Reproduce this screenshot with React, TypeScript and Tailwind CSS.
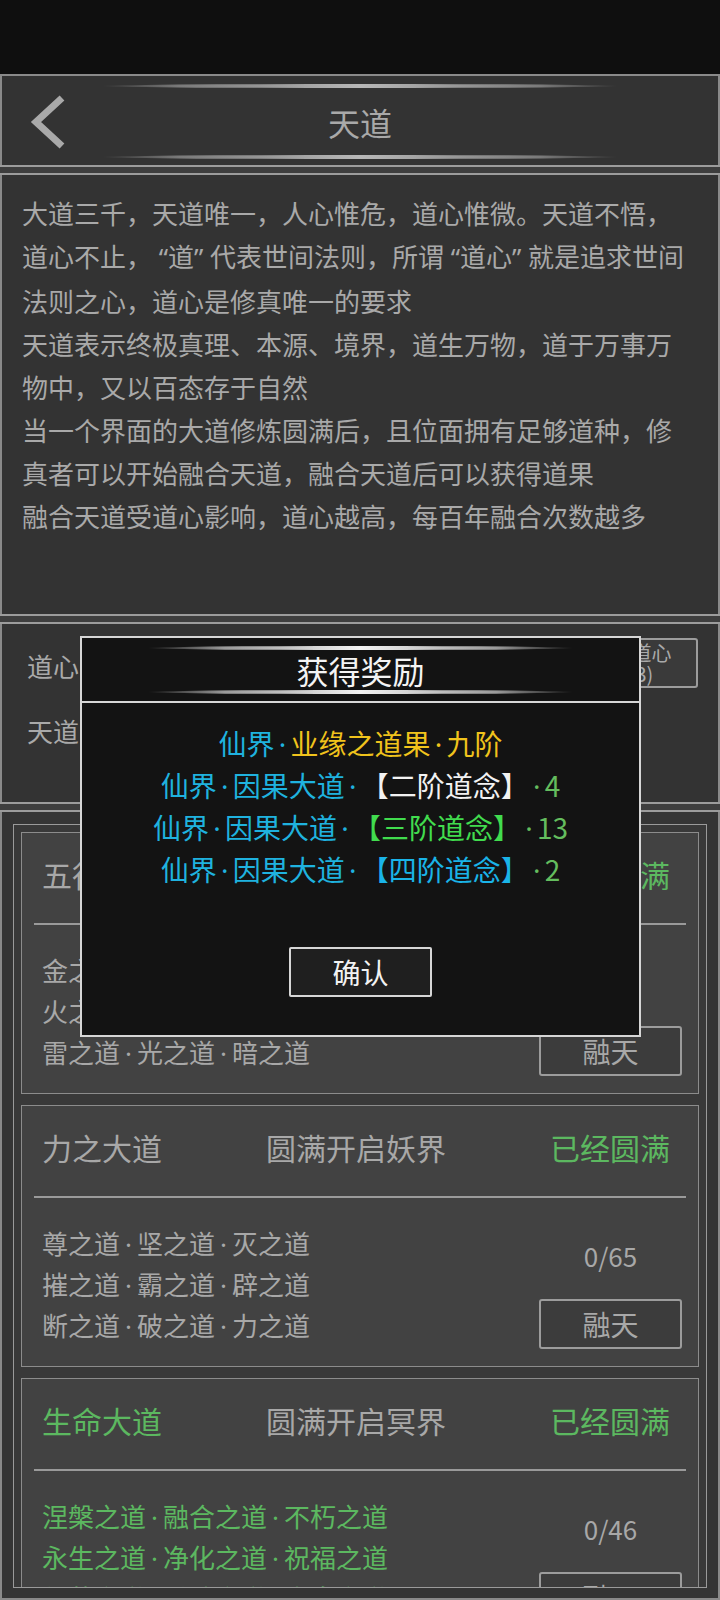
import { useState } from "react";

const FONT = "font-['Noto_Sans_CJK_SC','Noto_Sans',sans-serif]";

const INTRO = [
  "大道三千，天道唯一，人心惟危，道心惟微。天道不悟，道心不止，“道”代表世间法则，所谓“道心”就是追求世间法则之心，道心是修真唯一的要求",
  "天道表示终极真理、本源、境界，道生万物，道于万事万物中，又以百态存于自然",
  "当一个界面的大道修炼圆满后，且位面拥有足够道种，修真者可以开始融合天道，融合天道后可以获得道果",
  "融合天道受道心影响，道心越高，每百年融合次数越多",
];

type Dao = {
  name: string;
  unlock: string;
  done: boolean;
  green: boolean;
  paths: string[];
  progress: string;
};

const DAOS: Dao[] = [
  {
    name: "五行大道",
    unlock: "圆满开启仙界",
    done: true,
    green: false,
    paths: ["金之道·木之道·水之道", "火之道·土之道·风之道", "雷之道·光之道·暗之道"],
    progress: "0/77",
  },
  {
    name: "力之大道",
    unlock: "圆满开启妖界",
    done: true,
    green: false,
    paths: ["尊之道·坚之道·灭之道", "摧之道·霸之道·辟之道", "断之道·破之道·力之道"],
    progress: "0/65",
  },
  {
    name: "生命大道",
    unlock: "圆满开启冥界",
    done: true,
    green: true,
    paths: ["涅槃之道·融合之道·不朽之道", "永生之道·净化之道·祝福之道", "复苏之道·常驻之道·生息之道"],
    progress: "0/46",
  },
];

// middle dots and curly quotes come from the latin face, narrower than the CJK ones
function Rich({ text, dot }: { text: string; dot: string }) {
  return (
    <>
      {text.split(/([·“”])/).map((part, i) => {
        if (part === "·")
          return (
            <span key={i} className={`inline-block text-center font-['Noto_Sans'] ${dot}`}>
              ·
            </span>
          );
        if (part === "“")
          return (
            <span key={i} className="inline-block w-[16px] text-right font-['Noto_Sans']">
              “
            </span>
          );
        if (part === "”")
          return (
            <span key={i} className="inline-block w-[16px] text-left font-['Noto_Sans']">
              ”
            </span>
          );
        return part;
      })}
    </>
  );
}

// thin lens-shaped highlight used above and below titles
function GlowLine({ bright }: { bright?: boolean }) {
  return (
    <div
      className={
        bright
          ? "h-[4px] rounded-[50%] bg-[linear-gradient(90deg,transparent,#9a9a9a_18%,#f2f2f2_50%,#9a9a9a_82%,transparent)]"
          : "h-[4px] rounded-[50%] bg-[linear-gradient(90deg,transparent,#7a7a7a_15%,#b8b8b8_50%,#7a7a7a_85%,transparent)]"
      }
    />
  );
}

function Divider() {
  return <div className="h-[10px] border-y-2 border-[#9c9c9c] bg-[#3e3e3e]" />;
}

function DaoCard({ dao }: { dao: Dao }) {
  const nameColor = dao.green ? "text-[#5cb860]" : "text-[#a8a8a8]";
  return (
    <div className="h-[262px] shrink-0 border border-[#8c8c8c] bg-[#424242]">
      <div className="h-[90px] pb-[8px] px-5 pr-[28px] grid grid-cols-[1fr_auto_1fr] items-center text-[30px]">
        <span className={nameColor}>{dao.name}</span>
        <span className="text-[#a8a8a8]">{dao.unlock}</span>
        <span className={`justify-self-end ${dao.done ? "text-[#5cb860]" : "text-[#a8a8a8]"}`}>
          {dao.done ? "已经圆满" : "尚未圆满"}
        </span>
      </div>
      <div className="mx-3 h-[2px] bg-[#9a9a9a]" />
      <div className="flex justify-between pl-5 pr-4">
        <div className={`pt-[25px] text-[26px] leading-[40px] ${nameColor}`}>
          {dao.paths.map((p) => (
            <div key={p} className="whitespace-nowrap">
              <Rich text={p} dot="w-[17px]" />
            </div>
          ))}
        </div>
        <div className="w-[143px] pt-[38px] flex flex-col items-center">
          <div className="text-[26px] leading-[40px] text-[#a8a8a8]">{dao.progress}</div>
          <button className="mt-[23px] w-[143px] h-[50px] border-2 border-[#9c9c9c] rounded-[3px] bg-[#3c3c3c] text-[28px] text-[#a8a8a8]">
            融天
          </button>
        </div>
      </div>
    </div>
  );
}

function RewardDialog({ onClose }: { onClose: () => void }) {
  return (
    <div className="absolute left-[80px] top-[636px] w-[561px] h-[401px] border-2 border-[#d6d6d6] bg-[#131313] flex flex-col">
      <div className="h-[65px] border-b-2 border-[#d6d6d6] flex flex-col justify-between pt-[8px] pb-[7px]">
        <div className="mx-[66px]">
          <GlowLine bright />
        </div>
        <div className="text-center text-[32px] leading-[36px] text-[#f4f4f4]">获得奖励</div>
        <div className="mx-[66px]">
          <GlowLine bright />
        </div>
      </div>
      <div className="pt-[20px] text-center text-[28px] leading-[41px] text-[#1fb2df]">
        <div>
          <Rich text="仙界·" dot="w-[16px]" />
          <span className="text-[#f0c31c]">
            <Rich text="业缘之道果·九阶" dot="w-[16px]" />
          </span>
        </div>
        <div>
          <Rich text="仙界·因果大道·" dot="w-[16px]" />
          <span className="text-[#f2f2f2]">【二阶道念】</span>
          <span className="text-[#64bd5e]">
            <Rich text="·4" dot="w-[16px]" />
          </span>
        </div>
        <div>
          <Rich text="仙界·因果大道·" dot="w-[16px]" />
          <span className="text-[#41dc4e]">【三阶道念】</span>
          <span className="text-[#64bd5e]">
            <Rich text="·13" dot="w-[16px]" />
          </span>
        </div>
        <div>
          <Rich text="仙界·因果大道·" dot="w-[16px]" />
          <span className="text-[#1ab4e8]">【四阶道念】</span>
          <span className="text-[#64bd5e]">
            <Rich text="·2" dot="w-[16px]" />
          </span>
        </div>
      </div>
      <div className="mt-[56px] flex justify-center">
        <button
          onClick={onClose}
          className="w-[143px] h-[50px] border-2 border-[#d6d6d6] rounded-[2px] bg-[#1f1f1f] text-[28px] text-[#f2f2f2]"
        >
          确认
        </button>
      </div>
    </div>
  );
}

export default function App() {
  const [showReward, setShowReward] = useState(true);

  return (
    <div className={`relative w-[720px] h-[1600px] overflow-hidden bg-[#0f0f0f] ${FONT}`}>
      <div className="h-[74px]" />

      {/* Title bar */}
      <header className="h-[91px] border-x-2 border-t-2 border-[#8a8a8a] bg-[#333333] flex flex-col pt-[8px]">
        <div className="mx-[100px]">
          <GlowLine />
        </div>
        <div className="flex-1 grid grid-cols-[1fr_auto_1fr] items-center">
          <svg width="44" height="56" viewBox="0 0 44 56" className="ml-[24px]">
            <polyline points="36,4 10,28 36,52" fill="none" stroke="#a9a9a9" strokeWidth="7" />
          </svg>
          <h1 className="text-[32px] leading-none text-[#a9a9a9]">天道</h1>
          <div />
        </div>
        <div className="mx-[100px] mb-[6px]">
          <GlowLine />
        </div>
      </header>
      <Divider />

      {/* Description */}
      <section className="h-[439px] border-x-2 border-[#8a8a8a] bg-[#333333] pl-5 pr-[30px] pt-[16px] text-[26px] leading-[43px] text-[#a9a9a9]">
        {INTRO.map((p) => (
          <p key={p}>
            <Rich text={p} dot="w-[17px]" />
          </p>
        ))}
      </section>
      <Divider />

      {/* Heart of dao */}
      <section className="h-[178px] border-x-2 border-[#8a8a8a] bg-[#333333] flex justify-between pl-[25px] pr-[20px]">
        <div className="text-[26px] leading-[40px] text-[#a9a9a9]">
          <div className="mt-[22px]">道心：1280</div>
          <div className="mt-[25px]">天道：第九重</div>
        </div>
        <div className="flex gap-[18px] pt-[14px]">
          <button className="w-[143px] h-[50px] border-2 border-[#9c9c9c] rounded-[3px] bg-[#3a3a3a] text-[20px] leading-[22px] text-[#a9a9a9]">
            参悟天道
          </button>
          <button className="w-[143px] h-[50px] border-2 border-[#9c9c9c] rounded-[3px] bg-[#3a3a3a] text-[20px] leading-[21px] text-[#a9a9a9]">
            <div className="pl-[10px]">感悟道心</div>
            <div className="pl-[10px]">(0/3)</div>
          </button>
        </div>
      </section>
      <Divider />

      {/* Great dao list */}
      <section className="h-[788px] border-x-2 border-b-2 border-[#8a8a8a] bg-[#353535] px-[11px] pt-[12px] pb-[10px]">
        <div className="h-full border border-[#9a9a9a] bg-[#393939] overflow-hidden p-[7px] flex flex-col gap-[11px]">
          {DAOS.map((d) => (
            <DaoCard key={d.name} dao={d} />
          ))}
        </div>
      </section>

      {showReward && <RewardDialog onClose={() => setShowReward(false)} />}
    </div>
  );
}
